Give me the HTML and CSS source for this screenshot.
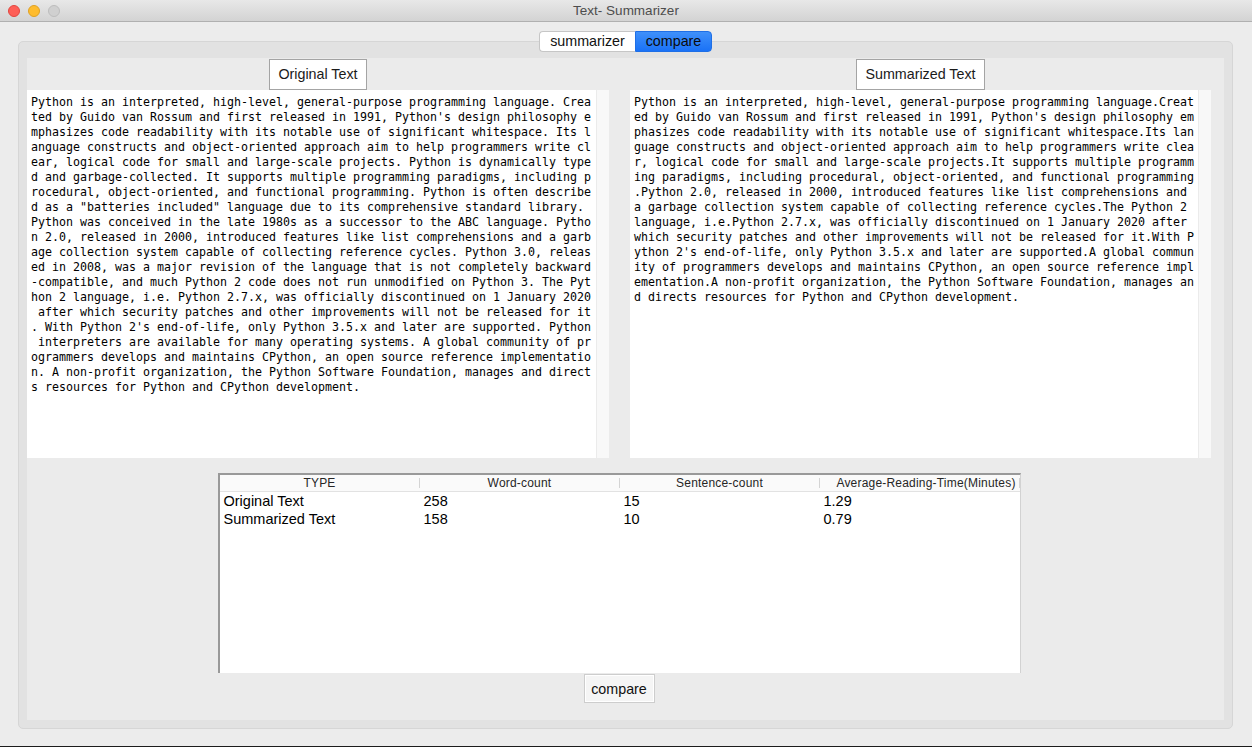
FILE: index.html
```html
<!DOCTYPE html>
<html>
<head>
<meta charset="utf-8">
<title>Text- Summarizer</title>
<link rel="stylesheet" href="styles.css">
</head>
<body>
<div class="window">
  <div class="titlebar">
    <div class="lights"><span class="light red"></span><span class="light yellow"></span><span class="light gray"></span></div>
    <div class="title">Text- Summarizer</div>
    <div></div>
  </div>
  <div class="main">
    <div class="tabs"><span class="tab tab-first">summarizer</span><span class="tab tab-active">compare</span></div>
    <div class="group">
      <div class="content">
        <div class="panes">
          <div class="pane">
            <div class="label">Original Text</div>
            <div class="textbox"><pre class="text">Python is an interpreted, high-level, general-purpose programming language. Crea
ted by Guido van Rossum and first released in 1991, Python's design philosophy e
mphasizes code readability with its notable use of significant whitespace. Its l
anguage constructs and object-oriented approach aim to help programmers write cl
ear, logical code for small and large-scale projects. Python is dynamically type
d and garbage-collected. It supports multiple programming paradigms, including p
rocedural, object-oriented, and functional programming. Python is often describe
d as a "batteries included" language due to its comprehensive standard library.
Python was conceived in the late 1980s as a successor to the ABC language. Pytho
n 2.0, released in 2000, introduced features like list comprehensions and a garb
age collection system capable of collecting reference cycles. Python 3.0, releas
ed in 2008, was a major revision of the language that is not completely backward
-compatible, and much Python 2 code does not run unmodified on Python 3. The Pyt
hon 2 language, i.e. Python 2.7.x, was officially discontinued on 1 January 2020
 after which security patches and other improvements will not be released for it
. With Python 2's end-of-life, only Python 3.5.x and later are supported. Python
 interpreters are available for many operating systems. A global community of pr
ogrammers develops and maintains CPython, an open source reference implementatio
n. A non-profit organization, the Python Software Foundation, manages and direct
s resources for Python and CPython development.</pre><div class="scroll"></div></div>
          </div>
          <div class="pane">
            <div class="label">Summarized Text</div>
            <div class="textbox"><pre class="text">Python is an interpreted, high-level, general-purpose programming language.Creat
ed by Guido van Rossum and first released in 1991, Python's design philosophy em
phasizes code readability with its notable use of significant whitespace.Its lan
guage constructs and object-oriented approach aim to help programmers write clea
r, logical code for small and large-scale projects.It supports multiple programm
ing paradigms, including procedural, object-oriented, and functional programming
.Python 2.0, released in 2000, introduced features like list comprehensions and 
a garbage collection system capable of collecting reference cycles.The Python 2 
language, i.e.Python 2.7.x, was officially discontinued on 1 January 2020 after 
which security patches and other improvements will not be released for it.With P
ython 2's end-of-life, only Python 3.5.x and later are supported.A global commun
ity of programmers develops and maintains CPython, an open source reference impl
ementation.A non-profit organization, the Python Software Foundation, manages an
d directs resources for Python and CPython development.</pre><div class="scroll"></div></div>
          </div>
        </div>
        <div class="table">
          <div class="thead">
            <div class="th">TYPE</div>
            <div class="th">Word-count</div>
            <div class="th">Sentence-count</div>
            <div class="th th-last">Average-Reading-Time(Minutes)</div>
          </div>
          <div class="tr">
            <div class="td">Original Text</div>
            <div class="td">258</div>
            <div class="td">15</div>
            <div class="td">1.29</div>
          </div>
          <div class="tr">
            <div class="td">Summarized Text</div>
            <div class="td">158</div>
            <div class="td">10</div>
            <div class="td">0.79</div>
          </div>
        </div>
        <button class="btn">compare</button>
      </div>
    </div>
  </div>
</div>
</body>
</html>
```
FILE: styles.css
```css
* { box-sizing: border-box; }
html, body { margin: 0; padding: 0; }
body {
  width: 1252px;
  height: 747px;
  overflow: hidden;
  background: #ececec;
  font-family: "Liberation Sans", Arial, sans-serif;
}
.window {
  width: 1252px;
  height: 747px;
  display: flex;
  flex-direction: column;
  background: #ececec;
  border-bottom: 1px solid #1c1c1c;
}
.titlebar {
  flex: none;
  height: 22px;
  display: grid;
  grid-template-columns: 1fr auto 1fr;
  align-items: center;
  padding: 0 8px;
  background: linear-gradient(#e8e8e8, #d3d3d3);
  border-bottom: 1px solid #b0b0b0;
}
.lights { display: flex; gap: 8px; }
.light { width: 12px; height: 12px; border-radius: 50%; }
.red { background: #fe5f57; border: 1px solid #e2463f; }
.yellow { background: #febc2e; border: 1px solid #dfa123; }
.gray { background: #d0d0d0; border: 1px solid #bdbdbd; }
.title { font-size: 13.5px; color: #4d4d4d; }

.main {
  flex: 1;
  display: flex;
  flex-direction: column;
  padding: 9px 19px 0 18px;
}
.tabs {
  align-self: center;
  display: flex;
  height: 21px;
  position: relative;
  z-index: 1;
  margin-bottom: -11px;
  font-size: 14.3px;
}
.tab {
  height: 21px;
  line-height: 19px;
  text-align: center;
  color: #111;
}
.tab-first {
  width: 96px;
  background: #fff;
  border: 1px solid #c6c6c6;
  border-right: none;
  border-radius: 4px 0 0 4px;
}
.tab-active {
  width: 77px;
  background: linear-gradient(#3f90fa, #1a72f6);
  border: 1px solid #1f6fe6;
  border-radius: 0 4px 4px 0;
  color: #0b0b0b;
}
.group {
  flex: none;
  height: 688px;
  display: flex;
  background: #e2e2e2;
  border: 1px solid #d6d6d6;
  border-radius: 5px;
  padding: 16px 8px 8px 8px;
}
.content {
  flex: 1;
  display: flex;
  flex-direction: column;
  align-items: center;
  background: #ebebeb;
  padding: 1px 13px 0 0;
}
.panes {
  align-self: stretch;
  display: grid;
  grid-template-columns: 582px 581px;
  column-gap: 21px;
}
.pane {
  display: flex;
  flex-direction: column;
  align-items: center;
}
.label {
  height: 31px;
  padding: 0 8px;
  background: #fff;
  border: 1px solid #a4a4a4;
  font-size: 14.3px;
  line-height: 29px;
  color: #1a1a1a;
}
.textbox {
  align-self: stretch;
  height: 368px;
  display: flex;
  background: #fff;
}
.text {
  flex: 1;
  margin: 0;
  padding: 5px 0 0 4px;
  font-family: "DejaVu Sans Mono", monospace;
  font-size: 11.63px;
  line-height: 15px;
  white-space: pre;
  color: #000;
  overflow: hidden;
}
.scroll {
  width: 13px;
  background: #f8f8f8;
  border-left: 1px solid #ebebeb;
}
.table {
  margin-top: 15px;
  width: 803px;
  height: 200px;
  background: #fff;
  border-top: 2px solid #999;
  border-left: 2px solid #999;
  border-right: 1px solid #d2d2d2;
}
.thead {
  display: grid;
  grid-template-columns: repeat(4, 200px);
  height: 17px;
  background: #fafafa;
  border-bottom: 1px solid #e2e2e2;
}
.th {
  position: relative;
  font-size: 12px;
  letter-spacing: 0.2px;
  line-height: 16px;
  text-align: center;
  color: #262626;
}
.th-last { padding-left: 13px; white-space: nowrap; }
.th::after {
  content: "";
  position: absolute;
  right: 0;
  top: 3px;
  bottom: 3px;
  width: 1px;
  background: #d4d4d4;
}
.tr {
  display: grid;
  grid-template-columns: repeat(4, 200px);
  height: 18px;
}
.td {
  padding-left: 4px;
  font-size: 14.5px;
  line-height: 18px;
  color: #000;
}
.btn {
  margin-top: 1px;
  width: 71px;
  height: 29px;
  padding: 0;
  background: #f5f5f5;
  border: 1px solid #cdcdcd;
  box-shadow: inset 0 0 0 1px #fff;
  font-family: "Liberation Sans", Arial, sans-serif;
  font-size: 14.3px;
  color: #111;
}
```
